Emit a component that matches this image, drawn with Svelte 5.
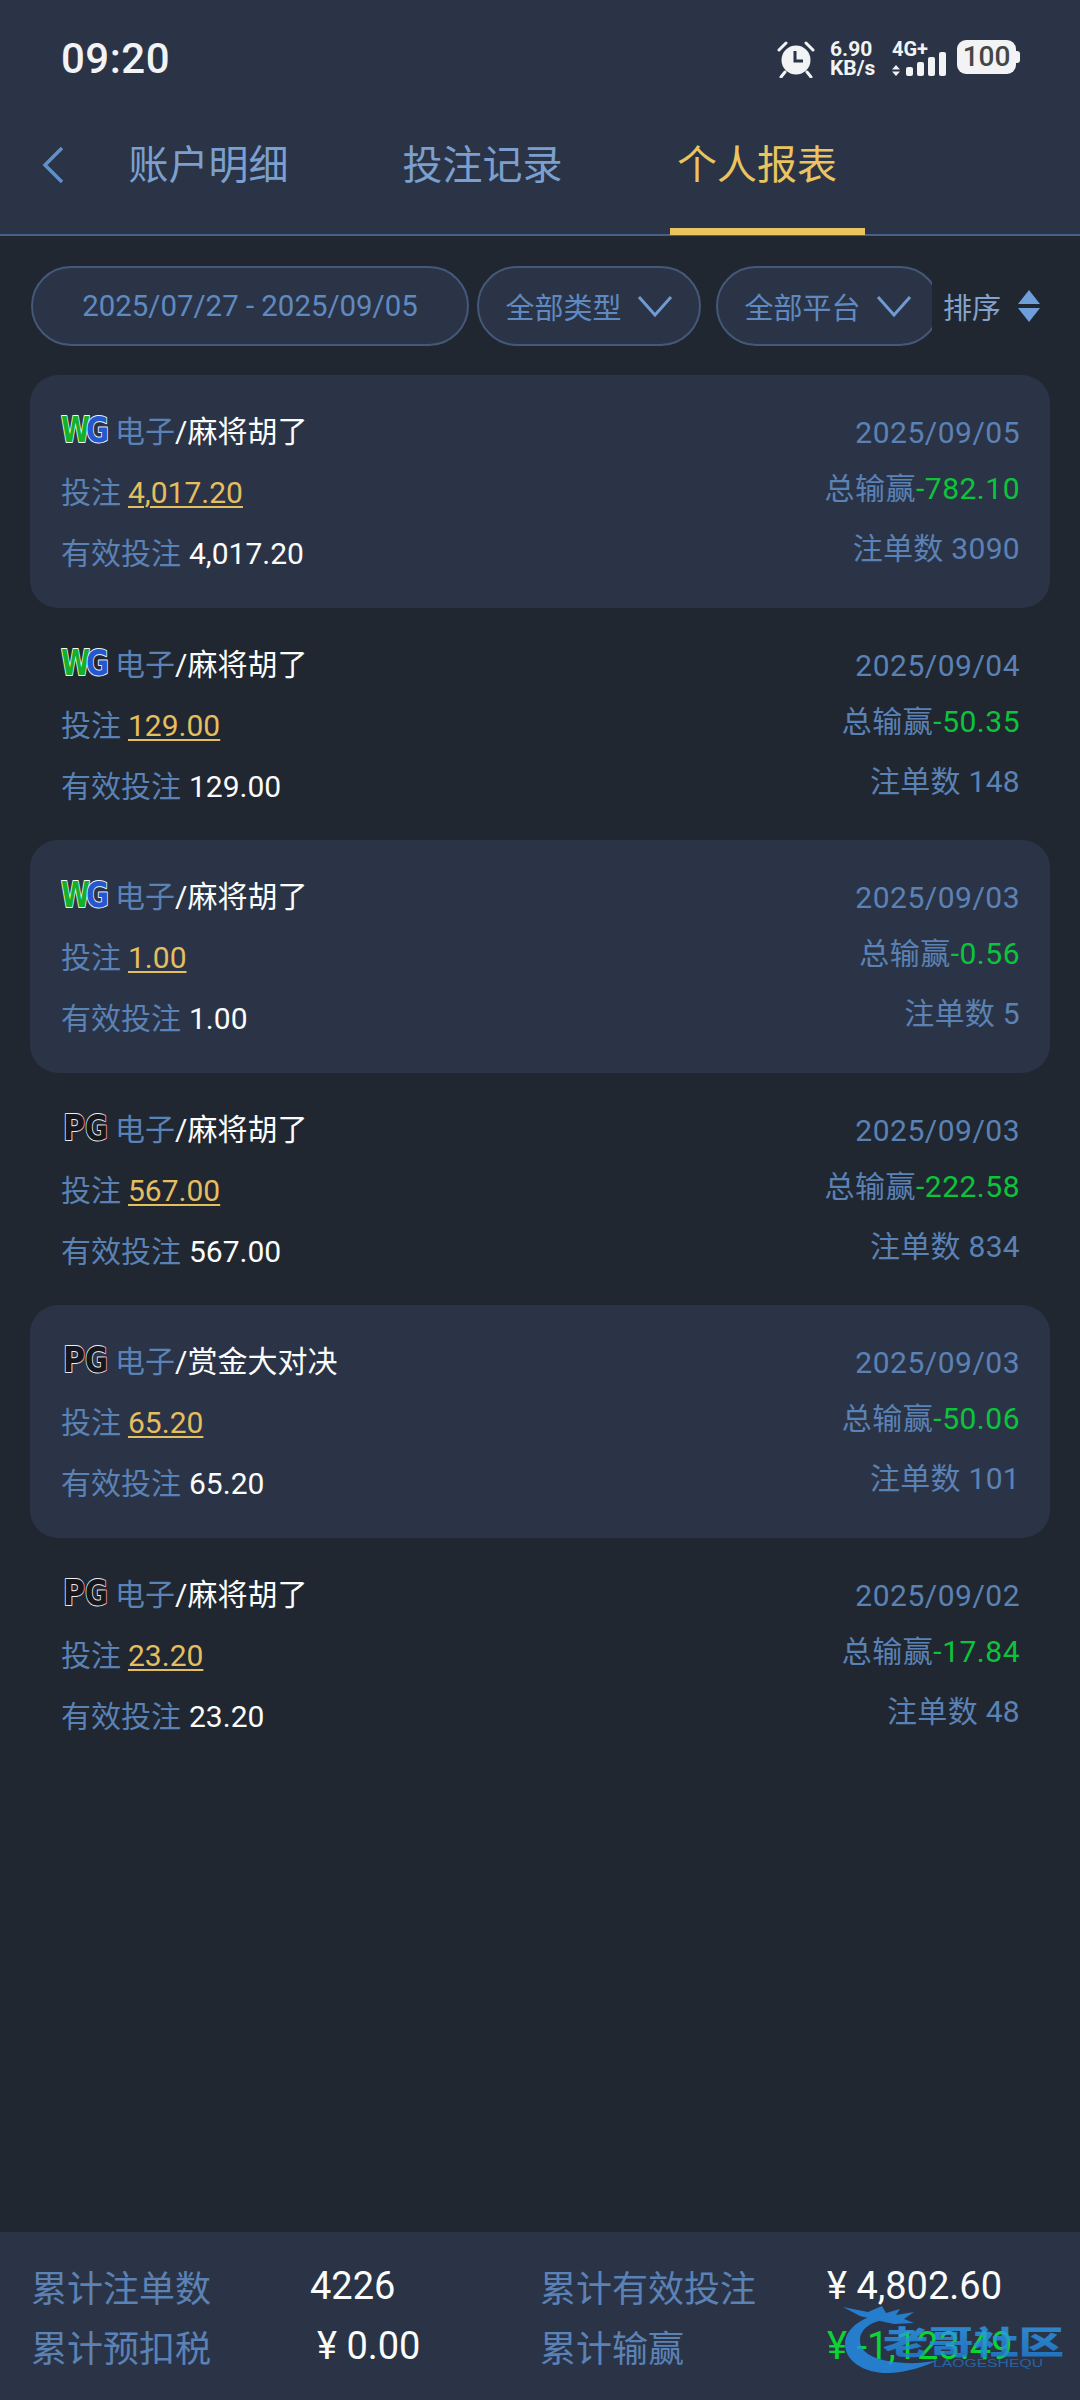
<script>
	const rows = [
		{ logo: 'WG', game: '麻将胡了', bet: '4,017.20', date: '2025/09/05', win: '-782.10', count: 3090 },
		{ logo: 'WG', game: '麻将胡了', bet: '129.00', date: '2025/09/04', win: '-50.35', count: 148 },
		{ logo: 'WG', game: '麻将胡了', bet: '1.00', date: '2025/09/03', win: '-0.56', count: 5 },
		{ logo: 'PG', game: '麻将胡了', bet: '567.00', date: '2025/09/03', win: '-222.58', count: 834 },
		{ logo: 'PG', game: '赏金大对决', bet: '65.20', date: '2025/09/03', win: '-50.06', count: 101 },
		{ logo: 'PG', game: '麻将胡了', bet: '23.20', date: '2025/09/02', win: '-17.84', count: 48 }
	]
</script>

<div class="page">
	<svg class="defs" width="0" height="0">
		<defs>
			<linearGradient id="pgs" x1="0" y1="0" x2="1" y2="0">
				<stop offset="0" stop-color="#8fe6f5" />
				<stop offset="0.3" stop-color="#f2eef8" />
				<stop offset="0.75" stop-color="#f2eef2" />
				<stop offset="1" stop-color="#f0708a" />
			</linearGradient>
			<linearGradient id="mk" x1="0" y1="0" x2="0" y2="1">
				<stop offset="0" stop-color="#35a4f4" />
				<stop offset="1" stop-color="#1d7ed8" />
			</linearGradient>
		</defs>
	</svg>

	<header>
		<div class="status">
			<span class="time">09:20</span>
			<div class="sys">
				<svg class="alarm" width="38" height="38" viewBox="0 0 38 38">
					<circle cx="19" cy="20" r="14.5" fill="#f1f3f4" />
					<path d="M2 10 L9 3 M36 10 L29 3 M8 32 L4 37 M30 32 L34 37" stroke="#f1f3f4" stroke-width="3" stroke-linecap="round" />
					<path d="M18 11 V21 H26" fill="none" stroke="#2b3447" stroke-width="3" />
				</svg>
				<div class="speed"><span>6.90</span><span>KB/s</span></div>
				<div class="net">
					<span class="gen">4G+</span>
					<svg width="54" height="26" viewBox="0 0 54 26">
						<path d="M4 14 L0 18.5 H8 Z M0 20.5 H8 L4 25 Z" fill="#f1f3f4" />
						<rect x="14" y="16" width="7" height="9" rx="2" fill="#f1f3f4" />
						<rect x="25" y="11" width="7" height="14" rx="2" fill="#f1f3f4" />
						<rect x="36" y="6" width="7" height="19" rx="2" fill="#f1f3f4" />
						<rect x="47" y="1" width="7" height="24" rx="2" fill="#f1f3f4" />
					</svg>
				</div>
				<div class="battery"><span>100</span></div>
			</div>
		</div>
		<nav>
			<svg class="back" width="26" height="38" viewBox="0 0 26 38">
				<path d="M22 2 L5 19 L22 36" fill="none" stroke="#6190c8" stroke-width="3.5" />
			</svg>
			<span class="tab">账户明细</span>
			<span class="tab">投注记录</span>
			<span class="tab active">个人报表</span>
		</nav>
	</header>

	<div class="filters">
		<div class="chip date">2025/07/27 - 2025/09/05</div>
		<div class="chip type">
			全部类型
			<svg width="36" height="22" viewBox="0 0 36 22"><path d="M2 2 L18 20 L34 2" fill="none" stroke="#6e9bd2" stroke-width="3" /></svg>
		</div>
		<div class="clip">
			<div class="chip platform">
				全部平台
				<svg width="36" height="22" viewBox="0 0 36 22"><path d="M2 2 L18 20 L34 2" fill="none" stroke="#6e9bd2" stroke-width="3" /></svg>
			</div>
		</div>
		<div class="sort">
			<span>排序</span>
			<svg width="22" height="32" viewBox="0 0 22 32">
				<path d="M11 0 L22 14 H0 Z" fill="#6e9fdb" />
				<path d="M0 18 H22 L11 32 Z" fill="#6e9fdb" />
			</svg>
		</div>
	</div>

	<div class="list">
		{#each rows as row, i}
			<div class="row" class:card={i % 2 === 0}>
				<div class="col">
					<div class="title">
						{#if row.logo === 'WG'}
							<svg class="logo" width="50" height="30" viewBox="0 0 50 30">
								<text class="wg-w" x="1" y="27" textLength="29" lengthAdjust="spacingAndGlyphs">W</text>
								<text class="wg-g" x="26" y="27" textLength="23" lengthAdjust="spacingAndGlyphs">G</text>
							</svg>
						{:else}
							<svg class="logo" width="50" height="30" viewBox="0 0 50 30">
								<text class="pg" x="3" y="27" textLength="22" lengthAdjust="spacingAndGlyphs">P</text>
								<text class="pg" x="25" y="27" textLength="23" lengthAdjust="spacingAndGlyphs">G</text>
							</svg>
						{/if}
						<span class="blue">电子</span><span class="white">/{row.game}</span>
					</div>
					<div class="line"><span class="blue">投注</span><span class="bet">{row.bet}</span></div>
					<div class="line"><span class="blue">有效投注</span><span class="white valid">{row.bet}</span></div>
				</div>
				<div class="col right">
					<div class="blue rdate">{row.date}</div>
					<div class="rwin"><span class="blue">总输赢</span><span class="green">{row.win}</span></div>
					<div class="blue rcount">注单数 {row.count}</div>
				</div>
			</div>
		{/each}
	</div>

	<footer>
		<span class="flabel">累计注单数</span>
		<span class="fval">4226</span>
		<span class="flabel">累计有效投注</span>
		<span class="fval">¥ 4,802.60</span>
		<span class="flabel">累计预扣税</span>
		<span class="fval indent">¥ 0.00</span>
		<span class="flabel">累计输赢</span>
		<span class="fval fgreen">¥ -1,123.49</span>

		<!-- watermark sits on top of the last value -->
		<svg class="mark" width="224" height="72" viewBox="0 0 224 72">
			<path d="M36 8 C14 14 3 26 3 38 C3 56 24 68 48 67 C66 66 84 60 96 54 C80 58 62 58 46 55 C30 52 18 46 18 34 C18 24 28 16 42 14 Z" fill="#2490ec" />
			<path d="M1 1 L26 6 L40 0 L44 7 L58 3 L54 9 L72 6 L62 13 L72 17 L52 18 L38 15 L18 10 Z" fill="#2490ec" />
			<text class="mk-cn" x="41" y="48" textLength="181" lengthAdjust="spacingAndGlyphs" fill="url(#mk)">老哥社区</text>
			<text class="mk-en" x="91" y="61" textLength="110" lengthAdjust="spacingAndGlyphs">LAOGESHEQU</text>
		</svg>
	</footer>
</div>

<style>
	:global(body) {
		margin: 0;
		background: #202731;
	}

	.page {
		width: 1080px;
		height: 2400px;
		position: relative;
		display: flex;
		flex-direction: column;
		background: #202731;
		font-family: Roboto, 'Noto Sans CJK SC', sans-serif;
		overflow: hidden;
	}

	.defs {
		position: absolute;
	}

	header {
		height: 236px;
		box-sizing: border-box;
		background: #2b3447;
		border-bottom: 2px solid #47608a;
		flex-shrink: 0;
	}

	.status {
		height: 118px;
		padding: 0 64px 0 61px;
		display: flex;
		justify-content: space-between;
		align-items: flex-start;
	}

	.time {
		margin-top: 34px;
		font-size: 42px;
		line-height: 49px;
		font-weight: 500;
		letter-spacing: 0.5px;
		color: #f1f3f4;
	}

	.sys {
		margin-top: 40px;
		display: flex;
		align-items: flex-start;
		color: #f1f3f4;
	}

	.speed {
		width: 44px;
		margin-left: 15px;
		display: flex;
		flex-direction: column;
		font-size: 21px;
		line-height: 19px;
		font-weight: 700;
		white-space: nowrap;
	}

	.net {
		margin-left: 18px;
		width: 54px;
	}

	.gen {
		display: block;
		font-size: 20px;
		line-height: 14px;
		margin-top: 2px;
		font-weight: 700;
		white-space: nowrap;
	}

	.net svg {
		display: block;
		margin-top: -5px;
	}

	.battery {
		margin-left: 11px;
		width: 59px;
		height: 34px;
		border-radius: 9px;
		background: #f1f3f4;
		color: #454545;
		font-size: 28px;
		font-weight: 500;
		line-height: 34px;
		text-align: center;
		position: relative;
	}

	.battery::after {
		content: '';
		position: absolute;
		right: -4px;
		top: 11px;
		width: 4px;
		height: 12px;
		border-radius: 0 3px 3px 0;
		background: #f1f3f4;
	}

	nav {
		height: 116px;
		display: flex;
		align-items: flex-start;
		position: relative;
	}

	.back {
		position: absolute;
		left: 40px;
		top: 28px;
	}

	.tab {
		margin-top: 23px;
		font-size: 40px;
		line-height: 50px;
		color: #7ba0cf;
		width: 195px;
		height: 94px;
		text-align: center;
		margin-right: 79px;
		box-sizing: border-box;
	}

	.tab:nth-of-type(1) {
		margin-left: 111px;
	}

	.tab.active {
		color: #eac45f;
		margin-left: 11px;
		text-align: left;
		padding-left: 7px;
		border-bottom: 7px solid #eac45f;
	}

	.filters {
		height: 80px;
		margin-top: 30px;
		padding-left: 31px;
		display: flex;
		align-items: center;
		flex-shrink: 0;
	}

	.chip {
		box-sizing: border-box;
		height: 80px;
		display: flex;
		align-items: center;
		justify-content: center;
		background: #2b3447;
		border: 2px solid #44597a;
		border-radius: 40px;
		font-size: 29px;
		color: #5f8ac1;
		white-space: nowrap;
		flex-shrink: 0;
	}

	.date {
		width: 438px;
		font-size: 29.4px;
	}

	.type {
		width: 224px;
		margin-left: 8px;
		gap: 15px;
	}

	.clip {
		width: 216px;
		height: 80px;
		margin-left: 15px;
		overflow: hidden;
		flex-shrink: 0;
	}

	.platform {
		width: 224px;
		gap: 15px;
	}

	.sort {
		margin-left: 11px;
		display: flex;
		align-items: center;
		gap: 17px;
		font-size: 29px;
		color: #84a3cc;
	}

	.list {
		margin-top: 29px;
		display: flex;
		flex-direction: column;
		flex: 1;
	}

	.row {
		height: 232.6px;
		margin: 0 30px;
		padding: 0 30px 0 31px;
		box-sizing: border-box;
		display: flex;
		justify-content: space-between;
		border-radius: 28px;
		font-size: 30px;
	}

	.row.card {
		background: #2b3447;
	}

	.col {
		display: flex;
		flex-direction: column;
	}

	.title {
		margin-top: 36px;
		height: 42px;
		line-height: 42px;
		display: flex;
		align-items: center;
	}

	.logo {
		margin-left: -1px;
		margin-right: 5px;
		margin-top: -4px;
		overflow: visible;
	}

	.logo text {
		font-family: 'DejaVu Sans', sans-serif;
		font-weight: 700;
		font-size: 36px;
		paint-order: stroke;
		stroke-linejoin: round;
	}

	.wg-w {
		fill: #14b02a;
		stroke: #f2fff0;
		stroke-width: 2px;
	}

	.wg-g {
		fill: #2558d0;
		stroke: #eaf4ff;
		stroke-width: 2px;
	}

	.pg {
		fill: #15171d;
		stroke: url(#pgs);
		stroke-width: 2px;
	}

	.blue {
		color: #5b82b5;
	}

	.white {
		color: #fbfcfc;
	}

	.line {
		margin-top: 19px;
		height: 42px;
		line-height: 42px;
		display: flex;
		white-space: nowrap;
	}

	.bet {
		margin-left: 7px;
		color: #e5be60;
		text-decoration: underline;
		text-decoration-thickness: 2px;
		text-underline-offset: 3px;
	}

	.valid {
		margin-left: 8px;
	}

	.right {
		align-items: flex-end;
		letter-spacing: 0.3px;
	}

	.rdate {
		margin-top: 37px;
		line-height: 42px;
		letter-spacing: 0.5px;
	}

	.rwin {
		margin-top: 14px;
		line-height: 42px;
		letter-spacing: 0.5px;
	}

	.green {
		color: #0cc43c;
	}

	.rcount {
		margin-top: 18px;
		line-height: 42px;
	}

	footer {
		height: 168px;
		flex-shrink: 0;
		background: #2b3447;
		box-sizing: border-box;
		padding: 24px 0 0 31px;
		display: grid;
		grid-template-columns: 279px 230px 287px 1fr;
		grid-auto-rows: 60px;
		align-items: center;
		position: relative;
	}

	.flabel {
		font-size: 36px;
		color: #5b82b5;
		white-space: nowrap;
	}

	.fval {
		font-size: 38px;
		color: #fbfcfc;
		white-space: nowrap;
	}

	.indent {
		padding-left: 7px;
	}

	.fgreen {
		color: #0bd531;
	}

	.mark {
		position: absolute;
		left: 842px;
		top: 74px;
		opacity: 0.8;
	}

	.mk-cn {
		font-family: 'Noto Sans CJK SC', sans-serif;
		font-size: 32px;
		font-weight: 900;
	}

	.mk-en {
		font-family: 'Liberation Sans', sans-serif;
		font-size: 10px;
		fill: #2a6fb8;
	}
</style>
